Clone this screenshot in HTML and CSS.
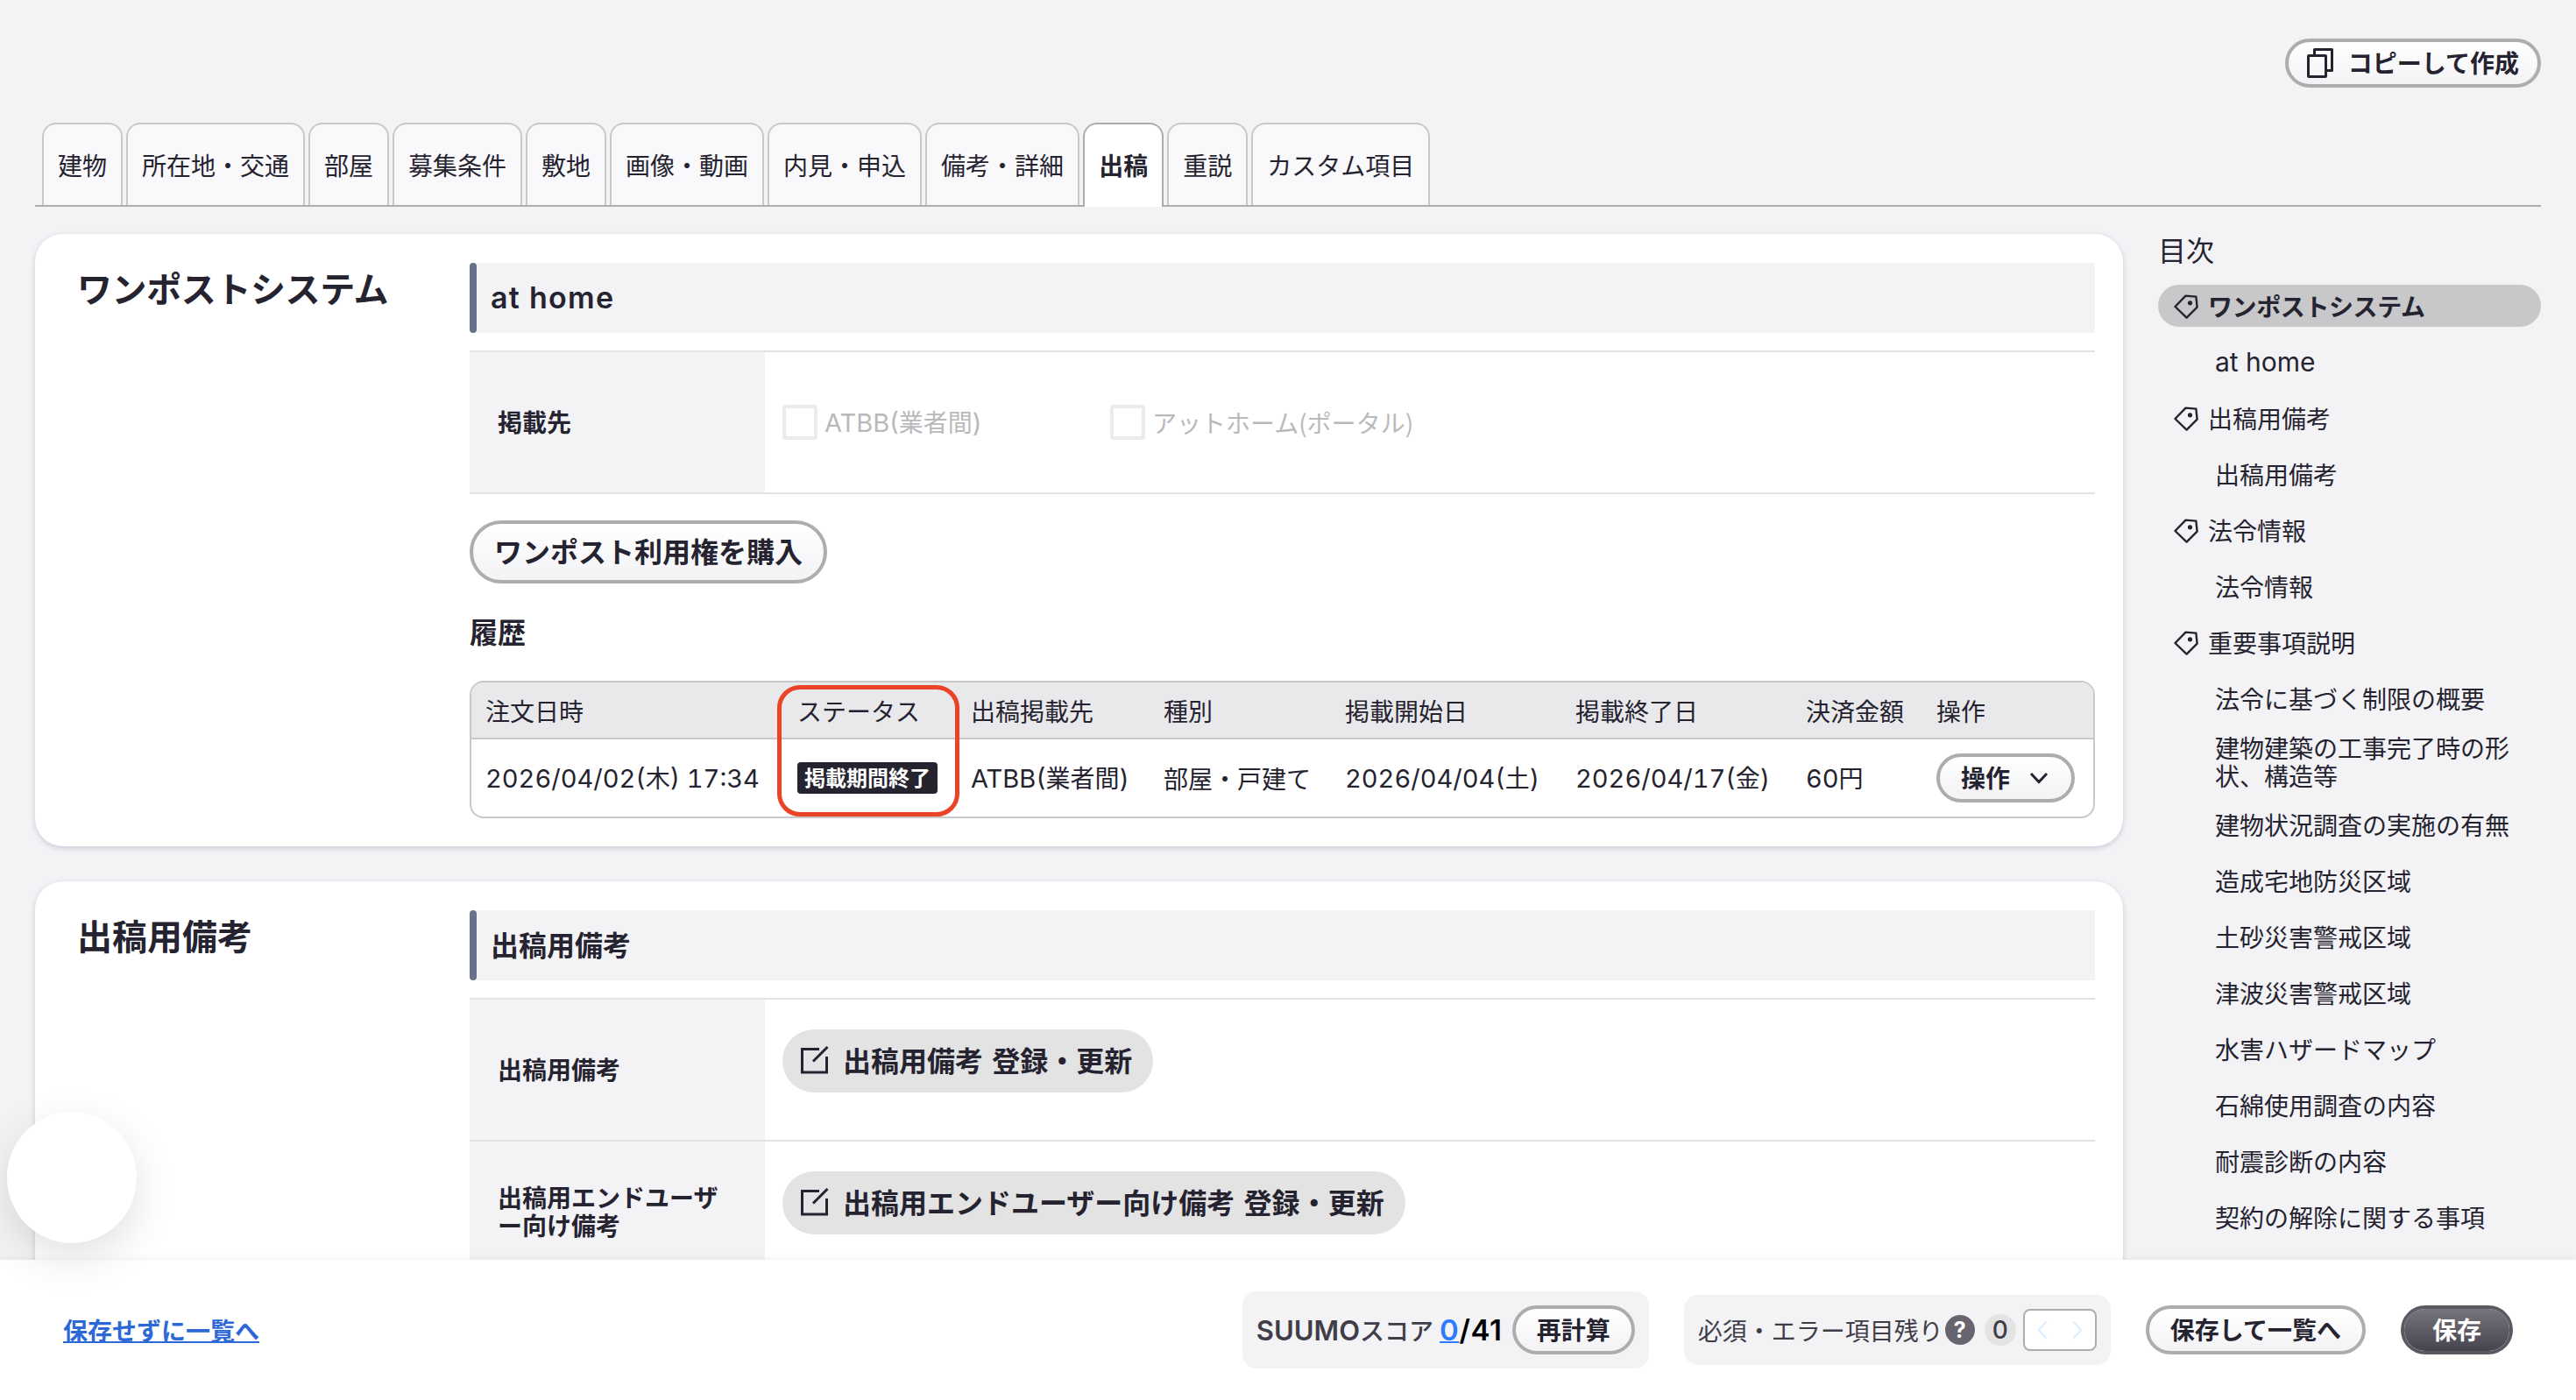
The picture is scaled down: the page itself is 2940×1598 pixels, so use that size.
FILE: index.html
```
<!DOCTYPE html>
<html lang="ja">
<head>
    <meta charset="UTF-8">
    <meta name="viewport" content="width=device-width, initial-scale=1.0">
    <title>出稿</title>
    <link rel="stylesheet" href="styles.css">
</head>
<body>
    <svg class="defs" width="0" height="0">
        <symbol id="icon-tag" viewBox="0 0 28 28">
            <path d="M1.5 14 L13.5 1.6 L25.4 2.6 L26.6 14.6 L14.6 26.6 Z" fill="none" stroke="currentColor" stroke-width="2.4" stroke-linejoin="round"/>
            <circle cx="18.5" cy="9.8" r="2.6" fill="currentColor"/>
        </symbol>
        <symbol id="icon-edit" viewBox="0 0 32 32">
            <path d="M21 3.5 H1.5 V30 H29.5 V12" fill="none" stroke="currentColor" stroke-width="3"/>
            <path d="M14 17.5 L30.5 1" fill="none" stroke="currentColor" stroke-width="3"/>
        </symbol>
    </svg>

    <main class="page">
        <div class="toolbar">
            <button class="btn">
                <svg class="icon-copy" viewBox="0 0 30 34">
                    <path d="M8.5 7 V1.5 H28.5 V25.5 H22" fill="none" stroke="currentColor" stroke-width="3" stroke-linejoin="round"/>
                    <rect x="1.5" y="8.5" width="20" height="24" rx="0.5" fill="none" stroke="currentColor" stroke-width="3"/>
                </svg>
                コピーして作成
            </button>
        </div>

        <nav class="tabs">
            <a class="tab">建物</a>
            <a class="tab">所在地・交通</a>
            <a class="tab">部屋</a>
            <a class="tab">募集条件</a>
            <a class="tab">敷地</a>
            <a class="tab">画像・動画</a>
            <a class="tab">内見・申込</a>
            <a class="tab">備考・詳細</a>
            <a class="tab active">出稿</a>
            <a class="tab">重説</a>
            <a class="tab">カスタム項目</a>
        </nav>

        <div class="columns">
            <div class="cards">
                <section class="card">
                    <h2 class="kana">ワンポストシステム</h2>
                    <div class="card-body">
                        <h3><span class="en">at home</span></h3>
                        <div class="form">
                            <div class="form-row">
                                <div class="form-label">掲載先</div>
                                <div class="form-value checks">
                                    <label class="check"><span class="box"></span><span><span class="en">ATBB(</span>業者間<span class="en">)</span></span></label>
                                    <label class="check"><span class="box"></span><span>アットホーム(ポータル)</span></label>
                                </div>
                            </div>
                        </div>
                        <button class="btn btn-large">ワンポスト利用権を購入</button>
                        <h4>履歴</h4>
                        <div class="history">
                            <div class="history-row history-head">
                                <div>注文日時</div>
                                <div>ステータス</div>
                                <div>出稿掲載先</div>
                                <div>種別</div>
                                <div>掲載開始日</div>
                                <div>掲載終了日</div>
                                <div>決済金額</div>
                                <div>操作</div>
                            </div>
                            <div class="history-row">
                                <div><span class="en">2026/04/02(</span>木<span class="en">) 17:34</span></div>
                                <div><span class="badge">掲載期間終了</span></div>
                                <div><span class="en">ATBB(</span>業者間<span class="en">)</span></div>
                                <div>部屋・戸建て</div>
                                <div><span class="en">2026/04/04(</span>土<span class="en">)</span></div>
                                <div><span class="en">2026/04/17(</span>金<span class="en">)</span></div>
                                <div><span class="en">60</span>円</div>
                                <div>
                                    <button class="btn btn-menu">
                                        操作
                                        <svg class="icon-chevron" viewBox="0 0 22 14"><path d="M2 2 L11 11.5 L20 2" fill="none" stroke="currentColor" stroke-width="3"/></svg>
                                    </button>
                                </div>
                            </div>
                            <div class="highlight"></div>
                        </div>
                    </div>
                </section>

                <section class="card">
                    <h2>出稿用備考</h2>
                    <div class="card-body">
                        <h3>出稿用備考</h3>
                        <div class="form">
                            <div class="form-row">
                                <div class="form-label">出稿用備考</div>
                                <div class="form-value">
                                    <button class="btn-edit"><svg class="icon-edit"><use href="#icon-edit"/></svg>出稿用備考 登録・更新</button>
                                </div>
                            </div>
                            <div class="form-row">
                                <div class="form-label">出稿用エンドユーザー向け備考</div>
                                <div class="form-value">
                                    <button class="btn-edit"><svg class="icon-edit"><use href="#icon-edit"/></svg>出稿用エンドユーザー向け備考 登録・更新</button>
                                </div>
                            </div>
                        </div>
                    </div>
                </section>
            </div>

            <aside class="toc">
                <p class="toc-title">目次</p>
                <a class="toc-item active kana"><svg class="icon-tag"><use href="#icon-tag"/></svg>ワンポストシステム</a>
                <a class="toc-item sub"><span class="en">at home</span></a>
                <a class="toc-item"><svg class="icon-tag"><use href="#icon-tag"/></svg>出稿用備考</a>
                <a class="toc-item sub">出稿用備考</a>
                <a class="toc-item"><svg class="icon-tag"><use href="#icon-tag"/></svg>法令情報</a>
                <a class="toc-item sub">法令情報</a>
                <a class="toc-item"><svg class="icon-tag"><use href="#icon-tag"/></svg>重要事項説明</a>
                <a class="toc-item sub">法令に基づく制限の概要</a>
                <a class="toc-item sub">建物建築の工事完了時の形状、構造等</a>
                <a class="toc-item sub">建物状況調査の実施の有無</a>
                <a class="toc-item sub">造成宅地防災区域</a>
                <a class="toc-item sub">土砂災害警戒区域</a>
                <a class="toc-item sub">津波災害警戒区域</a>
                <a class="toc-item sub">水害ハザードマップ</a>
                <a class="toc-item sub">石綿使用調査の内容</a>
                <a class="toc-item sub">耐震診断の内容</a>
                <a class="toc-item sub">契約の解除に関する事項</a>
            </aside>
        </div>
    </main>

    <footer class="footer">
        <a class="back-link">保存せずに一覧へ</a>
        <div class="actions">
            <div class="score">
                <span class="score-label"><span class="en">SUUMO</span>スコア</span>
                <span class="score-value en"><a>0</a>/41</span>
                <button class="btn">再計算</button>
            </div>
            <div class="remain">
                <span>必須・エラー項目残り</span>
                <span class="help">?</span>
                <span class="count">0</span>
                <span class="pager">
                    <svg viewBox="0 0 12 22"><path d="M10.5 1.5 L2 11 L10.5 20.5" fill="none" stroke="currentColor" stroke-width="2.6"/></svg>
                    <svg viewBox="0 0 12 22"><path d="M1.5 1.5 L10 11 L1.5 20.5" fill="none" stroke="currentColor" stroke-width="2.6"/></svg>
                </span>
            </div>
            <button class="btn">保存して一覧へ</button>
            <button class="btn btn-primary">保存</button>
        </div>
    </footer>

    <div class="bubble"></div>
</body>
</html>
```

FILE: styles.css
```
* {
    box-sizing: border-box;
}
body {
    margin: 0;
    height: 1598px;
    overflow: hidden;
    display: flex;
    flex-direction: column;
    background: #f3f3f6;
    color: #252330;
    font-family: "Noto Sans CJK JP", sans-serif;
    font-size: 28px;
    line-height: 32px;
}
.defs {
    position: absolute;
}
.en {
    font-family: Inter, "Noto Sans CJK JP", sans-serif;
    font-size: 30px;
}
.kana {
    letter-spacing: -0.4px;
}
h2, h3, h4, p {
    margin: 0;
}
.page {
    height: 1438px;
    padding: 44px 40px 0;
    overflow: hidden;
}
.toolbar {
    display: flex;
    justify-content: flex-end;
    margin-bottom: 40px;
}

/* buttons */
.btn {
    display: inline-flex;
    align-items: center;
    justify-content: center;
    flex: none;
    height: 56px;
    padding: 0 24px 2px;
    border: 4px solid #adadb0;
    border-radius: 28px;
    background: linear-gradient(#ffffff, #f3f3f6);
    color: #252330;
    font-family: inherit;
    font-size: 28px;
    font-weight: bold;
    line-height: 32px;
    white-space: nowrap;
}
.btn-large {
    height: 72px;
    padding-bottom: 4px;
    border-radius: 36px;
    font-size: 32px;
}
.btn-primary {
    padding: 0 32px 2px;
    border-color: #5c5963;
    background: linear-gradient(#77757d, #46434e) padding-box;
    color: #fff;
}
.icon-copy {
    width: 30px;
    height: 34px;
    margin: 2px 17px 0 -3px;
}
.toolbar .btn {
    padding: 0 21px 2px 24px;
}
.icon-chevron {
    width: 22px;
    height: 14px;
    margin: 2px 2px 0 22px;
}
.btn-edit {
    display: inline-flex;
    align-items: center;
    height: 72px;
    padding: 0 24px 5px 21px;
    border: 0;
    border-radius: 36px;
    background: #e3e3e3;
    color: #252330;
    font-family: inherit;
    font-size: 32px;
    font-weight: bold;
    word-spacing: 3px;
}
.icon-edit {
    width: 32px;
    height: 32px;
    margin: 2px 16px 0 0;
}

/* tabs */
.tabs {
    display: flex;
    gap: 4px;
    height: 96px;
    padding-left: 8px;
    background: linear-gradient(#adadb0, #adadb0) bottom / 100% 2px no-repeat;
}
.tab {
    height: 94px;
    padding: 0 16px;
    border: 2px solid #c8c8ca;
    border-bottom: 0;
    border-radius: 16px 16px 0 0;
    background: #f9f9fb;
    line-height: 93px;
}
.tab.active {
    height: 96px;
    border-color: #adadb0;
    background: #fff;
    font-weight: bold;
}

.columns {
    display: flex;
    gap: 40px;
    padding-top: 31px;
}
.cards {
    width: 2383px;
    display: flex;
    flex-direction: column;
    gap: 40px;
}
.card {
    display: flex;
    padding: 33px 32px 32px 48px;
    border-radius: 32px;
    background: #fff;
    box-shadow: 0 2px 6px rgba(37, 35, 80, 0.2);
}
.card h2 {
    width: 448px;
    padding-top: 2px;
    font-size: 40px;
    line-height: 52px;
}
.card-body {
    flex: 1;
}
.card h3 {
    height: 80px;
    margin-bottom: 20px;
    padding-left: 24px;
    background: linear-gradient(#f3f3f6, #f3f3f6) 4px 0 no-repeat;
    font-size: 32px;
    line-height: 76px;
    position: relative;
}
.card h3::before {
    content: "";
    position: absolute;
    left: 0;
    top: 0;
    width: 8px;
    height: 80px;
    border-radius: 4px;
    background: #68718b;
}
.card h3 .en {
    font-size: 34px;
    font-weight: 600;
    letter-spacing: 1.3px;
}
.card h4 {
    margin-top: 30px;
    font-size: 32px;
    line-height: 48px;
}

/* form */
.form {
    border-top: 2px solid #e3e3e3;
}
.form-row {
    display: flex;
    height: 162px;
    border-bottom: 2px solid #e3e3e3;
}
.form-label {
    display: flex;
    align-items: center;
    width: 337px;
    padding: 0 32px 3px;
    background: #f3f3f6;
    font-weight: bold;
}
.form-value {
    flex: 1;
    padding: 34px 20px;
}
.checks {
    display: flex;
    align-items: center;
    padding: 0 20px;
}
.check {
    display: flex;
    align-items: center;
    gap: 8px;
    width: 374px;
    color: #b9b9bb;
    white-space: nowrap;
}
.check .en {
    font-size: 29px;
}
.box {
    width: 40px;
    height: 40px;
    border: 4px solid #ebebeb;
    border-radius: 4px;
    background: #fff;
}
.card-body > .btn {
    display: flex;
    margin-top: 30px;
}

/* history table */
.history {
    position: relative;
    margin-top: 33px;
    border: 2px solid #c8c8ca;
    border-radius: 16px;
}
.history-row {
    display: grid;
    grid-template-columns: 356px 198px 220px 207px 263px 263px 149px 1fr;
    align-items: center;
    height: 88px;
    white-space: nowrap;
    font-variant-numeric: tabular-nums;
}
.history-row .en {
    font-size: 29px;
}
.history-row > div {
    padding-left: 16px;
}
.history-head {
    height: 65px;
    border-bottom: 2px solid #c8c8ca;
    border-radius: 14px 14px 0 0;
    background: #e9e9eb;
}
.badge {
    display: block;
    width: 160px;
    height: 36px;
    border-radius: 4px;
    background: #252330;
    color: #fff;
    font-size: 24px;
    font-weight: bold;
    line-height: 34px;
    text-align: center;
}
.btn-menu {
    display: flex;
}
.highlight {
    position: absolute;
    left: 349px;
    top: 3px;
    width: 208px;
    height: 150px;
    border: 5px solid #ea4426;
    border-radius: 26px;
}

/* table of contents */
.toc {
    width: 437px;
    display: flex;
    flex-direction: column;
    gap: 16px;
}
.toc-title {
    height: 42px;
    font-size: 32px;
    line-height: 34px;
}
.toc-item {
    display: flex;
    align-items: center;
    min-height: 48px;
    padding: 0 0 1px 18px;
    border-radius: 24px;
}
.toc-item.sub {
    padding: 0 32px 0 65px;
}
.toc-item.active {
    background: #c8c8ca;
    font-weight: bold;
}
.icon-tag {
    width: 28px;
    height: 28px;
    margin: 2px 11px 0 0;
}

/* footer */
.footer {
    display: flex;
    align-items: center;
    justify-content: space-between;
    height: 160px;
    padding: 0 72px;
    background: #fff;
    box-shadow: 0 0 8px rgba(37, 35, 48, 0.08);
    position: relative;
}
.back-link {
    color: #2c68d6;
    font-weight: bold;
    text-decoration: underline;
    text-decoration-thickness: 2px;
}
.actions {
    display: flex;
    align-items: center;
    gap: 40px;
}
.score {
    display: flex;
    align-items: center;
    width: 464px;
    height: 88px;
    padding: 0 16px;
    border-radius: 16px;
    background: #f3f3f6;
}
.score-label {
    color: #3f3d48;
    font-weight: 500;
}
.score-label .en {
    font-size: 31px;
    font-weight: 600;
}
.score-value {
    margin-left: 7px;
    color: #000;
    font-size: 33px;
    font-weight: 600;
    letter-spacing: 0.6px;
}
.score-value a {
    color: #2f7bff;
    text-decoration: underline;
    text-decoration-thickness: 2px;
}
.score .btn {
    margin-left: auto;
}
.remain {
    display: flex;
    align-items: center;
    width: 487px;
    height: 80px;
    padding: 0 16px;
    border-radius: 16px;
    background: #f3f3f6;
    color: #3f3d48;
}
.help, .count {
    width: 34px;
    height: 34px;
    margin-left: 2px;
    border-radius: 50%;
    background: #67646f;
    color: #fff;
    font-family: Inter, sans-serif;
    font-size: 25px;
    font-weight: bold;
    line-height: 34px;
    text-align: center;
}
.count {
    width: 36px;
    height: 36px;
    margin-left: 11px;
    background: #e3e3e3;
    color: #3f3d48;
    font-size: 28px;
    font-weight: 500;
    line-height: 36px;
}
.pager {
    display: flex;
    align-items: center;
    justify-content: space-between;
    width: 84px;
    height: 48px;
    margin-left: auto;
    padding: 0 14px;
    border: 2px solid #adadb0;
    border-radius: 8px;
    background: #fff;
    color: #e0eeff;
}
.pager svg {
    width: 12px;
    height: 22px;
}

.bubble {
    position: absolute;
    left: 8px;
    top: 1269px;
    width: 148px;
    height: 150px;
    border-radius: 50%;
    background: #fff;
    box-shadow: 0 16px 48px rgba(0, 0, 0, 0.12);
}
```
